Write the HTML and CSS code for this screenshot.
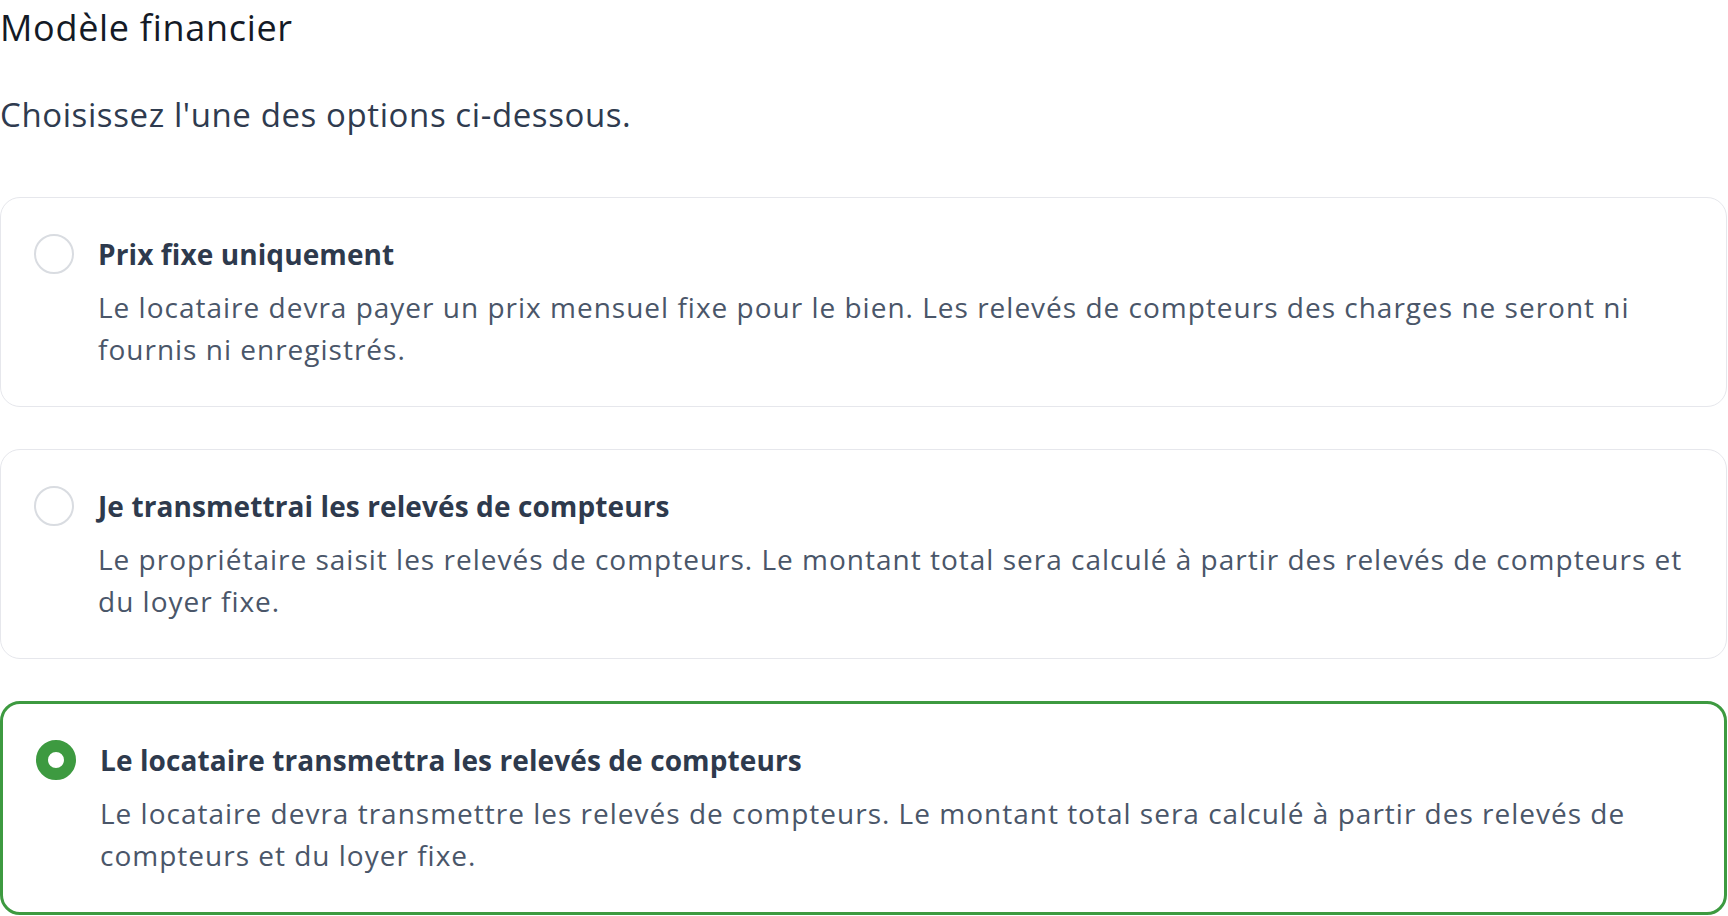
FILE: index.html
```html
<!DOCTYPE html>
<html lang="fr">
<head>
<meta charset="utf-8">
<title>Modèle financier</title>
<link rel="stylesheet" href="styles.css">
</head>
<body>
<main class="page">
  <h1 class="title">Modèle financier</h1>
  <p class="subtitle">Choisissez l'une des options ci-dessous.</p>
  <div class="options" role="radiogroup">
    <div class="option" role="radio" aria-checked="false">
      <span class="radio"></span>
      <div class="option-text">
        <div class="option-title">Prix fixe uniquement</div>
        <div class="option-desc">Le locataire devra payer un prix mensuel fixe pour le bien. Les relevés de compteurs des charges ne seront ni fournis ni enregistrés.</div>
      </div>
    </div>
    <div class="option" role="radio" aria-checked="false">
      <span class="radio"></span>
      <div class="option-text">
        <div class="option-title">Je transmettrai les relevés de compteurs</div>
        <div class="option-desc">Le propriétaire saisit les relevés de compteurs. Le montant total sera calculé à partir des relevés de compteurs et du loyer fixe.</div>
      </div>
    </div>
    <div class="option option-selected" role="radio" aria-checked="true">
      <span class="radio radio-checked"></span>
      <div class="option-text">
        <div class="option-title">Le locataire transmettra les relevés de compteurs</div>
        <div class="option-desc">Le locataire devra transmettre les relevés de compteurs. Le montant total sera calculé à partir des relevés de compteurs et du loyer fixe.</div>
      </div>
    </div>
  </div>
</main>
</body>
</html>
```

FILE: styles.css
```css
html, body {
  margin: 0;
  padding: 0;
  background: #ffffff;
}

body {
  font-family: "Open Sans", "Noto Sans", "Liberation Sans", sans-serif;
  -webkit-font-smoothing: antialiased;
}

.page {
  width: 1727px;
}

.title {
  margin: 0;
  font-size: 36px;
  line-height: 56px;
  font-weight: 400;
  letter-spacing: 0.7px;
  color: #141a26;
}

.subtitle {
  margin: 35px 0 0;
  font-size: 33px;
  line-height: 48px;
  letter-spacing: 0.6px;
  color: #2f3b4f;
}

.options {
  margin-top: 58px;
  display: flex;
  flex-direction: column;
  gap: 42px;
}

.option {
  display: flex;
  align-items: flex-start;
  gap: 24px;
  padding: 36px 33px 36px 33px;
  border: 1px solid #e6e7ec;
  border-radius: 20px;
  background: #ffffff;
}

.option-selected {
  border: 3px solid #3d9a40;
}

.radio {
  flex: 0 0 auto;
  box-sizing: border-box;
  width: 40px;
  height: 40px;
  border-radius: 50%;
  border: 2px solid #d9dce1;
  background: #ffffff;
}

.radio-checked {
  border: 12px solid #3d9a40;
  background: #ffffff;
}

.option-text {
  display: flex;
  flex-direction: column;
  gap: 12px;
  min-width: 0;
}

.option-title {
  font-size: 28px;
  line-height: 40px;
  font-weight: 700;
  letter-spacing: 0.1px;
  color: #2e3a4d;
}

.option-desc {
  font-size: 28px;
  line-height: 42px;
  letter-spacing: 1px;
  color: #4a5669;
}
```
